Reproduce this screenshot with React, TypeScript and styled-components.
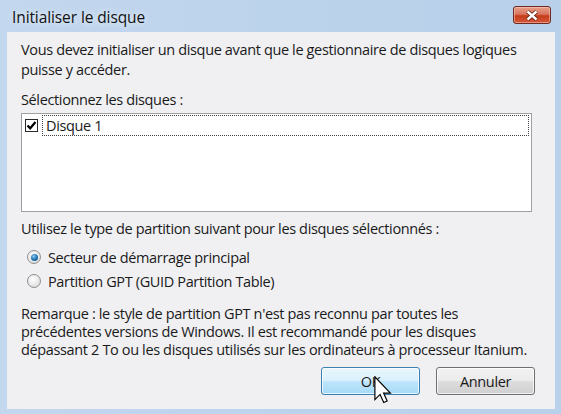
import React from "react";
import styled, { createGlobalStyle } from "styled-components";

const GlobalStyle = createGlobalStyle`
  html, body { margin: 0; padding: 0; }
  body { background: #bcd3ec; font-family: "Open Sans", "Noto Sans", sans-serif; }
`;

const Window = styled.div`
  position: relative;
  width: 561px;
  height: 414px;
  box-sizing: border-box;
  display: flex;
  flex-direction: column;
  padding: 0 6px 5px 7px;
  background: linear-gradient(90deg, #c3d7ee 0%, #bcd3ec 50%, #b9d0ea 100%);
  overflow: hidden;
`;

const TitleBar = styled.div`
  height: 32px;
  display: flex;
  align-items: center;
  justify-content: space-between;
  padding: 0 4px 0 5px;
  box-sizing: border-box;
`;

const Title = styled.span`
  font-size: 15.5px;
  letter-spacing: -0.1px;
  color: #111;
  margin-top: 2px;
  text-shadow: 0 0 6px rgba(255, 255, 255, 0.9);
`;

const CloseButton = styled.div`
  width: 38px;
  height: 18px;
  margin-top: -2px;
  box-sizing: border-box;
  border: 1px solid #6b2a22;
  border-radius: 3px;
  background: linear-gradient(180deg, #e9a08c 0%, #d8765d 45%, #c63c1a 55%, #d4583a 100%);
  display: flex;
  align-items: center;
  justify-content: center;
  box-shadow: inset 0 0 0 1px rgba(255, 210, 200, 0.5);
`;

const Client = styled.div`
  flex: 1;
  background: #f0f0f3;
  padding: 8px 20px 0 14px;
  display: flex;
  flex-direction: column;
  font-size: 14.5px;
  letter-spacing: -0.36px;
  color: #1a1a1a;
`;

const Para = styled.div<{ $lh: number; $mt?: number }>`
  line-height: ${(p) => p.$lh}px;
  margin-top: ${(p) => p.$mt ?? 0}px;
  white-space: nowrap;
`;

const ListBox = styled.div`
  margin-top: 3px;
  width: 511px;
  height: 99px;
  box-sizing: border-box;
  border: 1px solid #a0a0a0;
  background: #fff;
  padding: 1px 2px;
`;

const ListItem = styled.div`
  display: flex;
  align-items: center;
  gap: 4px;
  height: 21px;
`;

const CheckBox = styled.div`
  width: 13px;
  height: 13px;
  box-sizing: border-box;
  border: 1px solid #2a2a2a;
  background: #fff;
  display: flex;
  align-items: center;
  justify-content: center;
  margin-left: 1px;
`;

const ItemLabel = styled.div`
  flex: 1;
  height: 21px;
  box-sizing: border-box;
  border: 1px dotted #404040;
  padding-left: 3px;
  line-height: 19px;
`;

const RadioRow = styled.div<{ $mt: number }>`
  display: flex;
  align-items: center;
  gap: 7px;
  height: 24px;
  margin-top: ${(p) => p.$mt}px;
  padding-left: 6px;
`;

const Radio = styled.div<{ $checked?: boolean }>`
  width: 14px;
  height: 14px;
  box-sizing: border-box;
  border-radius: 50%;
  border: 1px solid #8e8f8f;
  background: radial-gradient(circle at 40% 35%, #ffffff 0%, #e6e6e6 60%, #cfcfcf 100%);
  display: flex;
  align-items: center;
  justify-content: center;
  &::after {
    content: "";
    display: ${(p) => (p.$checked ? "block" : "none")};
    width: 7px;
    height: 7px;
    border-radius: 50%;
    background: radial-gradient(circle at 40% 35%, #8fd0f5 0%, #2a7ab8 45%, #124f80 100%);
  }
`;

const ButtonRow = styled.div`
  display: flex;
  justify-content: flex-end;
  gap: 16px;
  margin-top: 8px;
`;

const Button = styled.div<{ $primary?: boolean }>`
  width: 99px;
  height: 28px;
  box-sizing: border-box;
  border-radius: 3px;
  border: 1px solid ${(p) => (p.$primary ? "#3c7fb1" : "#707070")};
  background: ${(p) =>
    p.$primary
      ? "linear-gradient(180deg, #eaf6fd 0%, #d9f0fc 48%, #bee6fd 52%, #a7d9f5 100%)"
      : "linear-gradient(180deg, #f2f2f2 0%, #ebebeb 48%, #dddddd 52%, #cfcfcf 100%)"};
  box-shadow: inset 0 0 0 1px rgba(255, 255, 255, 0.7);
  display: flex;
  align-items: center;
  justify-content: center;
  font-size: 14.5px;
  color: #1a1a1a;
`;

const Cursor = styled.svg`
  position: absolute;
  left: 374px;
  top: 376px;
`;

export default function App() {
  return (
    <>
      <GlobalStyle />
      <Window>
        <TitleBar>
          <Title>Initialiser le disque</Title>
          <CloseButton>
            <svg width="14" height="11" viewBox="0 0 14 11">
              <path
                d="M2.5 1.5 L11.5 9.5 M11.5 1.5 L2.5 9.5"
                stroke="#5a1a10"
                strokeWidth="4"
                fill="none"
              />
              <path
                d="M2.5 1.5 L11.5 9.5 M11.5 1.5 L2.5 9.5"
                stroke="#ffffff"
                strokeWidth="2.4"
                fill="none"
              />
            </svg>
          </CloseButton>
        </TitleBar>
        <Client>
          <Para $lh={20}>
            Vous devez initialiser un disque avant que le gestionnaire de disques logiques
            <br />
            puisse y accéder.
          </Para>
          <Para $lh={20} $mt={10}>Sélectionnez les disques :</Para>
          <ListBox>
            <ListItem>
              <CheckBox>
                <svg width="11" height="11" viewBox="0 0 11 11">
                  <path d="M1.5 5.5 L4.2 8.3 L9.5 2" stroke="#000" strokeWidth="2.2" fill="none" />
                </svg>
              </CheckBox>
              <ItemLabel>Disque 1</ItemLabel>
            </ListItem>
          </ListBox>
          <Para $lh={20} $mt={7}>
            Utilisez le type de partition suivant pour les disques sélectionnés :
          </Para>
          <RadioRow $mt={6}>
            <Radio $checked />
            <span>Secteur de démarrage principal</span>
          </RadioRow>
          <RadioRow $mt={0}>
            <Radio />
            <span>Partition GPT (GUID Partition Table)</span>
          </RadioRow>
          <Para $lh={18} $mt={12}>
            Remarque : le style de partition GPT n'est pas reconnu par toutes les
            <br />
            précédentes versions de Windows. Il est recommandé pour les disques
            <br />
            dépassant 2 To ou les disques utilisés sur les ordinateurs à processeur Itanium.
          </Para>
          <ButtonRow>
            <Button $primary>OK</Button>
            <Button>Annuler</Button>
          </ButtonRow>
        </Client>
        <Cursor width="18" height="28" viewBox="0 0 12 19">
          <path
            d="M0.5 0.5 L0.5 16 L4 12.5 L6.5 18 L8.8 17 L6.4 11.6 L11 11.6 Z"
            fill="#fff"
            stroke="#000"
            strokeWidth="0.8"
            strokeLinejoin="miter"
          />
        </Cursor>
      </Window>
    </>
  );
}
